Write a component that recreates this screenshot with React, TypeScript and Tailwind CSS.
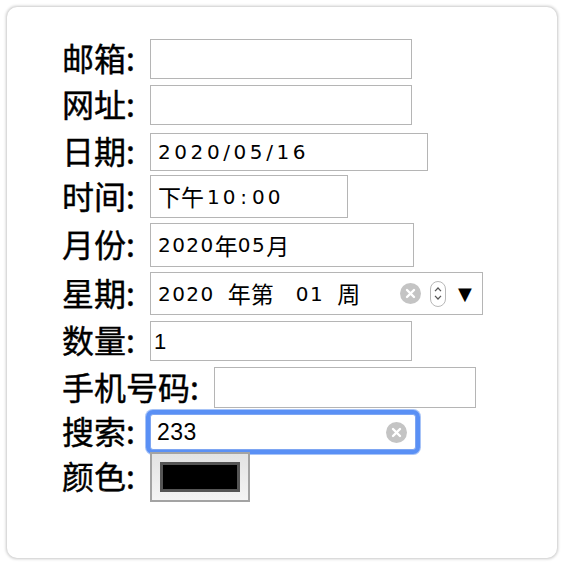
import React from "react";

const labelCls =
  "text-[32px] leading-none font-normal text-black whitespace-nowrap pr-[15px] pb-[4px] [-webkit-text-stroke:0.4px_black]";
const boxCls = "border border-[#b5b5b5] bg-white flex items-center";
const dateText =
  "text-[20px] text-black whitespace-pre flex items-center [font-family:'DejaVu_Sans','Noto_Sans_CJK_SC',sans-serif]";
const cjk = "text-[23px] tracking-[0px] [font-family:'Noto_Sans_CJK_SC',sans-serif]";

function ClearIcon() {
  return (
    <svg width="21" height="21" viewBox="0 0 21 21">
      <circle cx="10.5" cy="10.5" r="10.5" fill="#c4c4c4" />
      <path
        d="M7 7 L14 14 M14 7 L7 14"
        stroke="#fff"
        strokeWidth="2.4"
        strokeLinecap="round"
      />
    </svg>
  );
}

function Stepper() {
  return (
    <div className="w-[16px] h-[26px] rounded-[8px] border border-[#b8b8b8] flex flex-col items-center justify-center gap-[3px]">
      <svg width="8" height="5" viewBox="0 0 8 5">
        <path d="M1 4.2 L4 1 L7 4.2" stroke="#555" strokeWidth="1.2" fill="none" />
      </svg>
      <svg width="8" height="5" viewBox="0 0 8 5">
        <path d="M1 0.8 L4 4 L7 0.8" stroke="#555" strokeWidth="1.2" fill="none" />
      </svg>
    </div>
  );
}

export default function App() {
  return (
    <div className="w-[564px] h-[566px] bg-white p-[7px] [font-family:'Noto_Sans_CJK_SC',sans-serif]">
      <div className="w-[550px] h-[551px] rounded-[10px] bg-white shadow-[0_0_3px_1px_rgba(0,0,0,0.22)] pl-[55px] pt-[32px] flex flex-col">
        {/* 邮箱 */}
        <div className="flex items-center h-[40px]">
          <span className={labelCls}>邮箱:</span>
          <div className={`${boxCls} w-[262px] h-[40px]`} />
        </div>
        {/* 网址 */}
        <div className="flex items-center h-[40px] mt-[6px]">
          <span className={labelCls}>网址:</span>
          <div className={`${boxCls} w-[262px] h-[40px]`} />
        </div>
        {/* 日期 */}
        <div className="flex items-center h-[38px] mt-[8px]">
          <span className={labelCls}>日期:</span>
          <div className={`${boxCls} w-[278px] h-[38px] pl-[7px]`}>
            <span className={`${dateText} tracking-[3.6px]`}>2020/05/16</span>
          </div>
        </div>
        {/* 时间 */}
        <div className="flex items-center h-[43px] mt-[4px]">
          <span className={labelCls}>时间:</span>
          <div className={`${boxCls} w-[198px] h-[43px] pl-[7px]`}>
            <span className={`${dateText} tracking-[3px]`}>
              <span className={cjk}>下午</span>
              <span className="ml-[3px]">10</span>
              <span className="mx-[2px]">:</span>
              <span>00</span>
            </span>
          </div>
        </div>
        {/* 月份 */}
        <div className="flex items-center h-[44px] mt-[5px]">
          <span className={labelCls}>月份:</span>
          <div className={`${boxCls} w-[264px] h-[44px] pl-[7px]`}>
            <span className={`${dateText} tracking-[1.5px]`}>
              <span>2020</span>
              <span className={cjk}>年</span>
              <span>05</span>
              <span className={cjk}>月</span>
            </span>
          </div>
        </div>
        {/* 星期 */}
        <div className="flex items-center h-[43px] mt-[5px]">
          <span className={labelCls}>星期:</span>
          <div className={`${boxCls} w-[333px] h-[43px] pl-[7px]`}>
            <span className={`${dateText} tracking-[1.5px] flex-1`}>
              <span>2020</span>
              <span className={`${cjk} ml-[13px]`}>年第</span>
              <span className="ml-[22px]">01</span>
              <span className={`${cjk} ml-[13px]`}>周</span>
            </span>
            <div className="flex items-center mr-[10px]">
              <ClearIcon />
              <div className="ml-[9px]">
                <Stepper />
              </div>
              <span className="ml-[12px] text-[18px] leading-none text-black [font-family:'DejaVu_Sans',sans-serif]">
                ▼
              </span>
            </div>
          </div>
        </div>
        {/* 数量 */}
        <div className="flex items-center h-[40px] mt-[6px]">
          <span className={labelCls}>数量:</span>
          <div className={`${boxCls} w-[262px] h-[40px] pl-[3px]`}>
            <span className="text-[22px] text-black [font-family:'Liberation_Sans',sans-serif]">
              1
            </span>
          </div>
        </div>
        {/* 手机号码 */}
        <div className="flex items-center h-[41px] mt-[6px]">
          <span className={labelCls}>手机号码:</span>
          <div className={`${boxCls} w-[262px] h-[41px]`} />
        </div>
        {/* 搜索 */}
        <div className="flex items-center h-[36px] mt-[6px] relative z-0">
          <span className={labelCls}>搜索:</span>
          <div className="w-[266px] h-[36px] rounded-[3px] border border-[#7ea6f2] bg-white flex items-center pl-[6px] pr-[8px] shadow-[0_0_0_4px_#5a90f5,0_0_0_5px_#a8c4f7]">
            <span className="flex-1 text-[23px] tracking-[0.5px] text-black [font-family:'Liberation_Sans',sans-serif]">
              233
            </span>
            <ClearIcon />
          </div>
        </div>
        {/* 颜色 */}
        <div className="flex items-center h-[50px] mt-[2px] relative z-10">
          <span className={labelCls}>颜色:</span>
          <div className="w-[100px] h-[50px] border-2 border-[#a3a3a3] bg-gradient-to-b from-[#e3e3e3] to-[#f4f4f4] flex items-center justify-center">
            <div className="w-[80px] h-[30px] bg-black border-[3px] border-[#555555]" />
          </div>
        </div>
      </div>
    </div>
  );
}
